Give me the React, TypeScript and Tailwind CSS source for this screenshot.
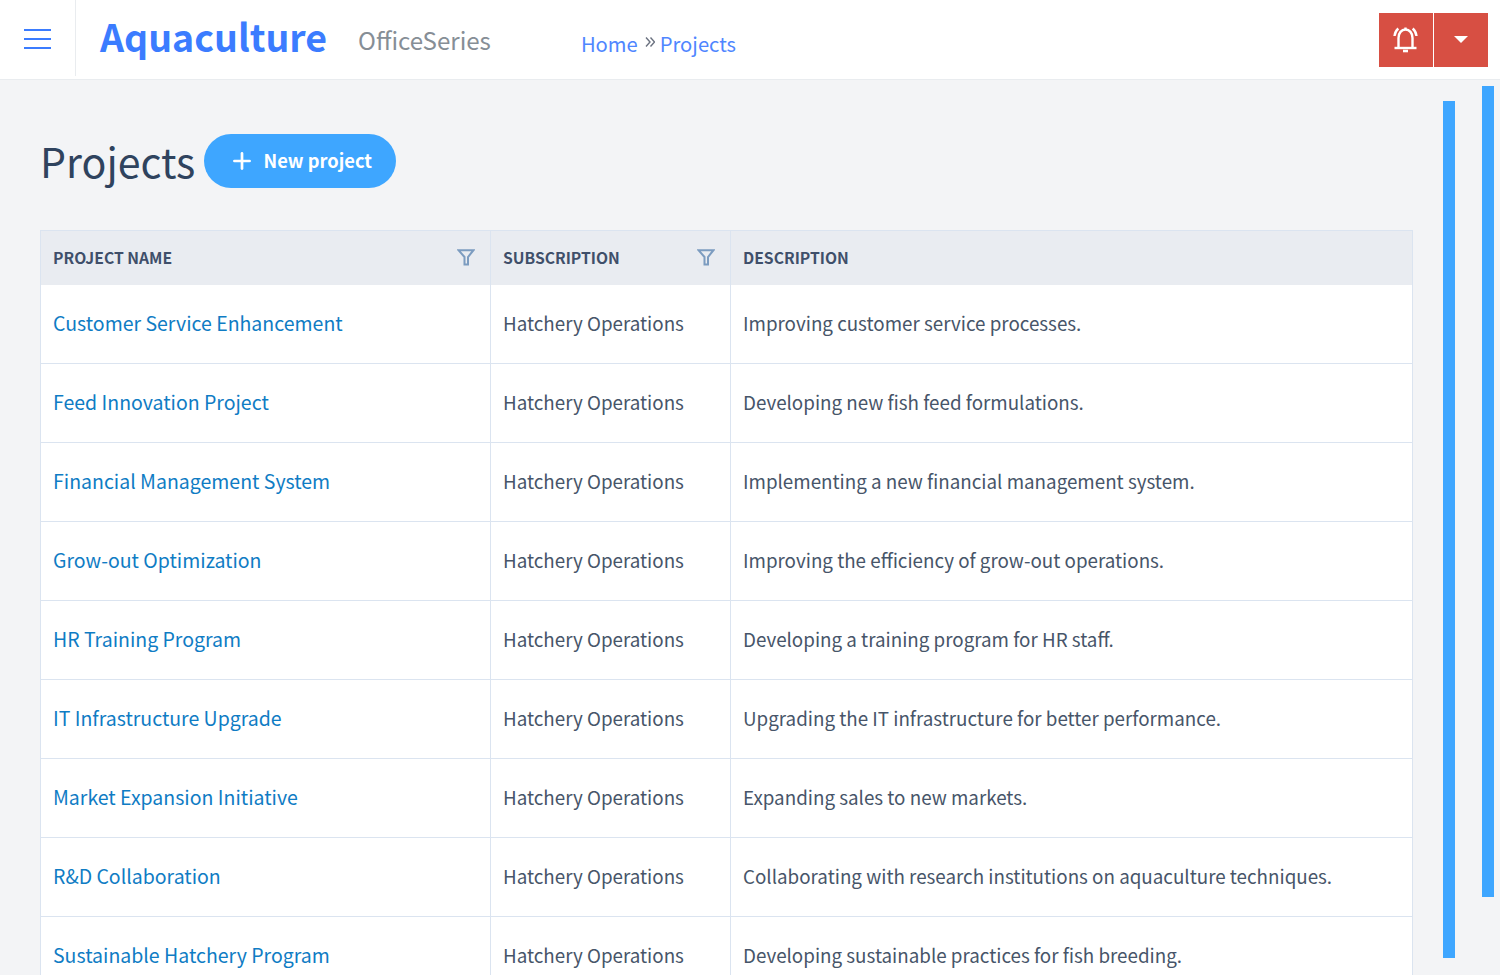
import { Plus } from "lucide-react";

const projects = [
  { name: "Customer Service Enhancement", description: "Improving customer service processes." },
  { name: "Feed Innovation Project", description: "Developing new fish feed formulations." },
  { name: "Financial Management System", description: "Implementing a new financial management system." },
  { name: "Grow-out Optimization", description: "Improving the efficiency of grow-out operations." },
  { name: "HR Training Program", description: "Developing a training program for HR staff." },
  { name: "IT Infrastructure Upgrade", description: "Upgrading the IT infrastructure for better performance." },
  { name: "Market Expansion Initiative", description: "Expanding sales to new markets." },
  { name: "R&D Collaboration", description: "Collaborating with research institutions on aquaculture techniques." },
  { name: "Sustainable Hatchery Program", description: "Developing sustainable practices for fish breeding." },
];

function BellIcon() {
  return (
    <svg width="28" height="28" viewBox="0 0 28 28" fill="none" stroke="white" strokeWidth="2.400">
      <path d="M6.500 22V12c0-5 3-8.500 7-8.500s7 3.500 7 8.500v10" />
      <path d="M2.500 22h22" />
      <path d="M11 25h5" strokeWidth="2.600" />
      <path d="M13.500 1.500v2.500" />
      <path d="M2.500 10c.3-3 1.600-5.600 3.800-7.500M24.500 10c-.3-3-1.600-5.600-3.800-7.500" />
    </svg>
  );
}

function FunnelIcon() {
  return (
    <svg width="18" height="17" viewBox="0 0 18 17" fill="none" stroke="#7c9cc0" strokeWidth="2">
      <path d="M1.500 1.200h15L11 8v7.500H7.500V8z" strokeLinejoin="miter" />
    </svg>
  );
}

function ChevronsIcon() {
  return (
    <svg width="12" height="12" viewBox="0 0 12 12" fill="none" stroke="#6b7280" strokeWidth="1.400" className="-mt-[4px]">
      <path d="M3 1.500 7 6l-4 4.500M7.500 1.500l4 4.500-4 4.500" />
    </svg>
  );
}

export default function App() {
  return (
    <div className="relative h-[975px] overflow-hidden bg-[#f3f4f6] font-['Noto_Sans_CJK_JP','Noto_Sans',sans-serif]">
      <header className="flex h-20 items-center border-b border-[#e9ecef] bg-white">
        <div className="flex h-[76px] w-[76px] shrink-0 flex-col items-start justify-center gap-[7px] self-start border-r border-[#e9ecef] pt-[1px] pl-6">
          <span className="h-0.5 w-[27px] bg-[#3b7cff]" />
          <span className="h-0.5 w-[27px] bg-[#3b7cff]" />
          <span className="h-0.5 w-[27px] bg-[#3b7cff]" />
        </div>
        <span className="mb-[7px] ml-6 text-[37.500px] leading-none font-bold text-[#3b7cff]">Aquaculture</span>
        <span className="mt-0.5 ml-[31px] text-[24.100px] leading-none text-[#868e96]">OfficeSeries</span>
        <nav className="mt-[9px] ml-[90px] flex items-center gap-[5px] text-[20.200px] leading-none text-[#4f86ff]">
          <span>Home</span>
          <ChevronsIcon />
          <span>Projects</span>
        </nav>
        <div className="mr-3 ml-auto flex h-[54px] gap-px">
          <div className="flex w-[54px] items-center justify-center bg-[#d74f43]">
            <BellIcon />
          </div>
          <div className="flex w-[54px] items-center justify-center bg-[#d74f43]">
            <span className="h-0 w-0 border-x-[7px] border-t-[7px] border-x-transparent border-t-white" />
          </div>
        </div>
      </header>

      <main className="px-10 pt-[53px]">
        <div className="flex h-[59px] items-center gap-[9px]">
          <h1 className="-mt-[5px] text-[41.100px] leading-[60px] text-[#2f435e]">Projects</h1>
          <button className="-mt-1 flex h-[54px] w-[192px] items-center justify-center gap-[9px] rounded-[27px] bg-[#3ea6ff] text-[18.300px] font-bold text-white">
            <Plus size={26} strokeWidth={2.500} />
            New project
          </button>
        </div>

        <table className="mt-[38px] w-[1373px] table-fixed border-collapse text-[18.800px]">
          <thead>
            <tr className="h-[54px] bg-[#e9ecf1] text-left text-[15.700px] text-[#3f4f6a]">
              <th className="w-[450px] border border-b-0 border-[#dbe4f0] px-3 font-bold">
                <div className="flex items-center justify-between pr-[3px]">
                  PROJECT NAME
                  <FunnelIcon />
                </div>
              </th>
              <th className="w-[240px] border border-b-0 border-[#dbe4f0] px-3 font-bold">
                <div className="flex items-center justify-between pr-[3px]">
                  SUBSCRIPTION
                  <FunnelIcon />
                </div>
              </th>
              <th className="border border-b-0 border-[#dbe4f0] px-3 font-bold">DESCRIPTION</th>
            </tr>
          </thead>
          <tbody className="bg-white">
            {projects.map((p) => (
              <tr key={p.name} className="h-[79px]">
                <td className="border border-t-0 border-[#dbe4f0] px-3 pb-0.5 text-[19.500px] whitespace-nowrap text-[#0f7cc4]">{p.name}</td>
                <td className="border border-t-0 border-[#dbe4f0] px-3 pb-0.5 whitespace-nowrap text-[#475569]">Hatchery Operations</td>
                <td className="border border-t-0 border-[#dbe4f0] px-3 pb-0.5 whitespace-nowrap text-[#475569]">{p.description}</td>
              </tr>
            ))}
          </tbody>
        </table>
      </main>

      <div className="absolute top-[101px] left-[1443px] h-[857px] w-3 bg-[#3ea6ff]" />
      <div className="absolute top-[86px] left-[1482px] h-[811px] w-3 bg-[#3ea6ff]" />
    </div>
  );
}
